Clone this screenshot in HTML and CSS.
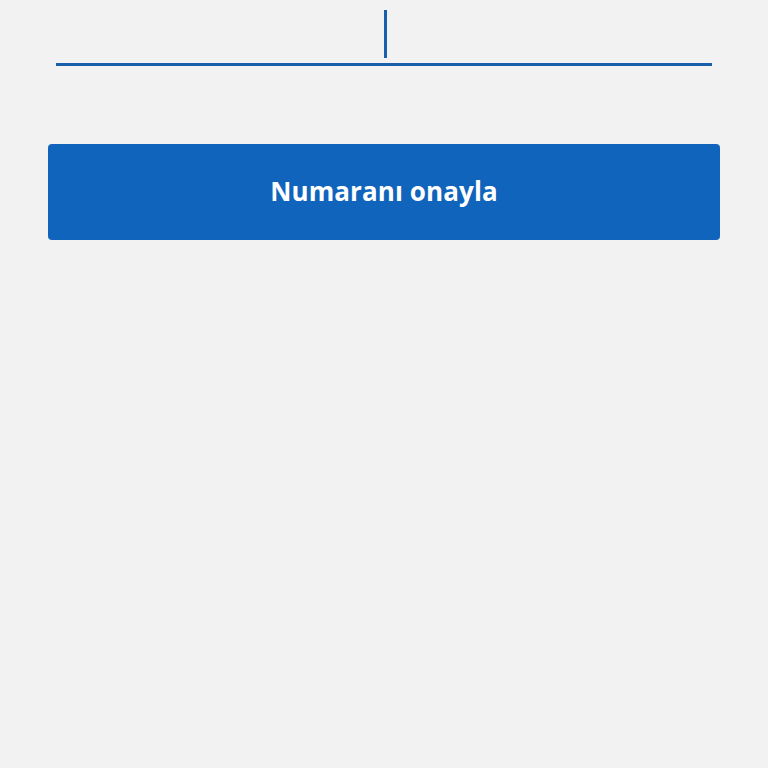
FILE: index.html
```html
<!DOCTYPE html>
<html lang="tr">
<head>
  <meta charset="UTF-8">
  <meta name="viewport" content="width=device-width, initial-scale=1.0">
  <title>Numara onayı</title>
  <link rel="stylesheet" href="styles.css">
</head>
<body>
  <div class="container">
    <div class="code-field">
      <span class="caret"></span>
    </div>

    <button class="confirm-btn">Numaranı onayla</button>
  </div>
</body>
</html>
```

FILE: styles.css
```css
* {
  margin: 0;
  padding: 0;
  box-sizing: border-box;
}

body {
  background: #f2f2f2;
  font-family: 'Open Sans', 'Noto Sans', sans-serif;
  color: #222;
}

.container {
  padding: 10px 48px 0;
}

.code-field {
  margin: 0 8px;
  height: 56px;
  border-bottom: 3px solid #1a5fab;
  display: flex;
  justify-content: center;
  align-items: flex-start;
}

.caret {
  display: block;
  width: 3px;
  height: 48px;
  margin-left: 3px;
  background: #1a5fab;
}

.confirm-btn {
  display: block;
  width: 100%;
  height: 96px;
  margin-top: 78px;
  padding-bottom: 2px;
  border: none;
  border-radius: 4px;
  background: #1064bc;
  color: #fff;
  font-family: 'Open Sans', 'Noto Sans', sans-serif;
  font-size: 26px;
  font-weight: 700;
  letter-spacing: 0.1px;
  cursor: pointer;
}
```
